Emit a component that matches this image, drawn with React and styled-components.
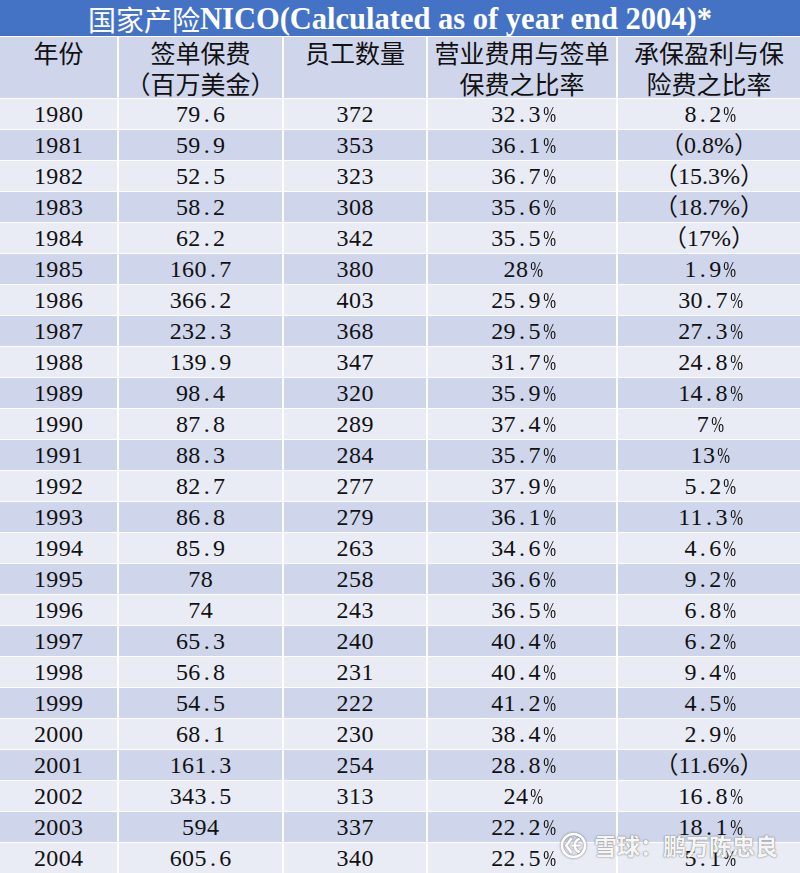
import React from "react";
import styled, { createGlobalStyle } from "styled-components";

const Global = createGlobalStyle`
  html, body { margin: 0; padding: 0; background: #fff; }
  body { font-family: "Liberation Serif", "Noto Sans CJK SC", serif; }
`;

const Page = styled.div`
  position: relative;
  width: 800px;
  height: 873px;
  overflow: hidden;
  background: #fff;
`;

const Table = styled.div`
  display: grid;
  grid-template-columns: 117px 163px 142px 188px 1fr;
  grid-template-rows: 36px 61px;
  grid-auto-rows: 30px;
  column-gap: 2px;
  row-gap: 1px;
  background: #fff;
`;

const Title = styled.div`
  grid-column: 1 / -1;
  background: #4472c4;
  color: #fff;
  display: flex;
  align-items: center;
  justify-content: center;
  white-space: nowrap;
  font-family: "Noto Sans CJK SC", sans-serif;
  font-size: 28px;
  line-height: 1;
  padding-top: 2px;
`;

const TitleLatin = styled.span`
  font-family: "Liberation Serif", serif;
  font-weight: 700;
  font-size: 30.5px;
`;

const HeadCell = styled.div`
  background: #cfd5ea;
  color: #111;
  display: flex;
  flex-direction: column;
  align-items: center;
  font-family: "Noto Sans CJK SC", sans-serif;
  font-size: 25px;
  line-height: 31px;
  white-space: nowrap;
`;

const Cell = styled.div`
  background: ${(p) => (p.$dark ? "#cfd5ea" : "#e9ebf5")};
  color: #111;
  display: flex;
  align-items: center;
  justify-content: center;
  font-family: "Liberation Serif", "Noto Sans CJK SC", serif;
  font-size: 24px;
  line-height: 30px;
  white-space: nowrap;
`;

const Glyph = styled.span`
  display: inline-block;
  width: 12.4px;
  text-align: center;
  transform: ${(p) => (p.$narrow ? "scaleX(0.64)" : "none")};
`;

const Plain = styled.span`
  font-family: "Liberation Serif", "Noto Sans CJK SC", serif;
`;

const Watermark = styled.div`
  position: absolute;
  right: 22px;
  bottom: 14px;
  display: flex;
  align-items: center;
  gap: 7px;
  color: rgba(255, 255, 255, 0.95);
  font-family: "Noto Sans CJK SC", sans-serif;
  font-weight: 700;
  font-size: 23px;
  line-height: 28px;
  text-shadow: 0 0 1px rgba(90, 90, 90, 0.8), 0 0 2px rgba(90, 90, 90, 0.5);
  pointer-events: none;
`;

const Logo = styled.svg`
  width: 27px;
  height: 27px;
  filter: drop-shadow(0 0 1px rgba(90, 90, 90, 0.8));
`;

const rows = [
  ["1980", "79.6", "372", "32.3%", "8.2%"],
  ["1981", "59.9", "353", "36.1%", "（0.8%）"],
  ["1982", "52.5", "323", "36.7%", "（15.3%）"],
  ["1983", "58.2", "308", "35.6%", "（18.7%）"],
  ["1984", "62.2", "342", "35.5%", "（17%）"],
  ["1985", "160.7", "380", "28%", "1.9%"],
  ["1986", "366.2", "403", "25.9%", "30.7%"],
  ["1987", "232.3", "368", "29.5%", "27.3%"],
  ["1988", "139.9", "347", "31.7%", "24.8%"],
  ["1989", "98.4", "320", "35.9%", "14.8%"],
  ["1990", "87.8", "289", "37.4%", "7%"],
  ["1991", "88.3", "284", "35.7%", "13%"],
  ["1992", "82.7", "277", "37.9%", "5.2%"],
  ["1993", "86.8", "279", "36.1%", "11.3%"],
  ["1994", "85.9", "263", "34.6%", "4.6%"],
  ["1995", "78", "258", "36.6%", "9.2%"],
  ["1996", "74", "243", "36.5%", "6.8%"],
  ["1997", "65.3", "240", "40.4%", "6.2%"],
  ["1998", "56.8", "231", "40.4%", "9.4%"],
  ["1999", "54.5", "222", "41.2%", "4.5%"],
  ["2000", "68.1", "230", "38.4%", "2.9%"],
  ["2001", "161.3", "254", "28.8%", "（11.6%）"],
  ["2002", "343.5", "313", "24%", "16.8%"],
  ["2003", "594", "337", "22.2%", "18.1%"],
  ["2004", "605.6", "340", "22.5%", "5.1%"],
];

const headers = [
  ["年份"],
  ["签单保费", "（百万美金）"],
  ["员工数量"],
  ["营业费用与签单", "保费之比率"],
  ["承保盈利与保", "险费之比率"],
];

function Value({ text }) {
  if (text.startsWith("（")) return <Plain>{text}</Plain>;
  return (
    <span>
      {text.split("").map((ch, i) => (
        <Glyph key={i} $narrow={ch === "%"}>
          {ch}
        </Glyph>
      ))}
    </span>
  );
}

export default function App() {
  return (
    <Page>
      <Global />
      <Table>
        <Title>
          国家产险<TitleLatin>NICO(Calculated as of year end 2004)*</TitleLatin>
        </Title>
        {headers.map((lines, i) => (
          <HeadCell key={i}>
            {lines.map((l, j) => (
              <span key={j}>{l}</span>
            ))}
          </HeadCell>
        ))}
        {rows.map((r, ri) =>
          r.map((v, ci) => (
            <Cell key={ri + "-" + ci} $dark={ri % 2 === 1}>
              <Value text={v} />
            </Cell>
          ))
        )}
      </Table>
      <Watermark>
        <Logo viewBox="0 0 28 28">
          <circle cx="14" cy="14" r="12" fill="none" stroke="#fff" strokeWidth="2.6" />
          <path d="M12 6.5 L6.5 14 L12 21.5" fill="none" stroke="#fff" strokeWidth="2.6" strokeLinejoin="round" />
          <path d="M19.5 7.5 C14 10 14 18 19.5 20.5" fill="none" stroke="#fff" strokeWidth="2.6" strokeLinecap="round" />
          <path d="M13 14 L20 14" fill="none" stroke="#fff" strokeWidth="2.2" strokeLinecap="round" />
        </Logo>
        <span>雪球：鹏万陈忠良</span>
      </Watermark>
    </Page>
  );
}
